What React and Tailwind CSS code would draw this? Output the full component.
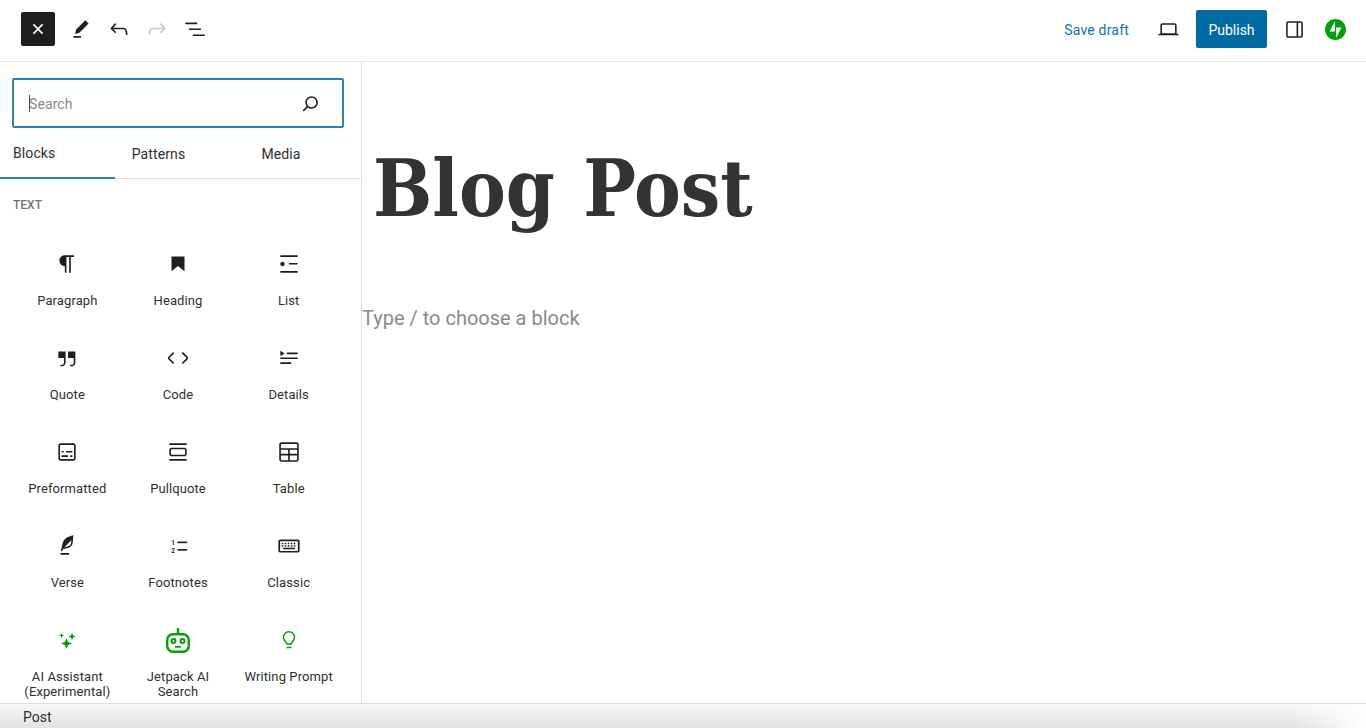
import React from "react";

const sans = "font-['Roboto','Liberation_Sans',sans-serif]";

function Icon({ d, size = 26, className = "", children }) {
  return (
    <svg width={size} height={size} viewBox="0 0 24 24" fill="currentColor" className={className}>
      {d && <path d={d} />}
      {children}
    </svg>
  );
}

const paths = {
  close: "M12 13.06l3.712 3.713 1.061-1.06L13.061 12l3.712-3.712-1.06-1.06L12 10.938 8.288 7.227l-1.061 1.06L10.939 12l-3.712 3.712 1.06 1.061L12 13.061z",
  pencil: "m19 7-3-3-8.5 8.5-1 4 4-1L19 7Zm-7 11.5H5V20h7v-1.5Z",
  undo: "M18.3 11.7c-.6-.6-1.4-.9-2.3-.9H6.7l2.9-3.3-1.1-1-4.5 5L8.5 16l1-1-2.7-2.7H16c.5 0 .9.2 1.3.5 1 1 1 3.4 1 4.5v.3h1.5v-.2c0-1.5 0-4.3-1.5-5.7z",
  redo: "M15.6 6.5l-1.1 1 2.9 3.3H8c-.9 0-1.7.3-2.3.9-1.4 1.5-1.4 4.2-1.4 5.6v.2h1.5v-.3c0-1.1 0-3.5 1-4.5.3-.3.7-.5 1.3-.5h9.2L14.5 15l1.1 1.1 4.6-4.6-4.6-5z",
  listView: "M3 6h11v1.5H3V6Zm3.5 5.5h11V13h-11v-1.5ZM21 17H10v1.5h11V17Z",
  search: "M13 5c-3.3 0-6 2.7-6 6 0 1.4.5 2.7 1.3 3.7l-3.8 3.8 1.1 1.1 3.8-3.8c1 .8 2.3 1.3 3.7 1.3 3.3 0 6-2.7 6-6S16.3 5 13 5zm0 10.5c-2.5 0-4.5-2-4.5-4.5s2-4.5 4.5-4.5 4.5 2 4.5 4.5-2 4.5-4.5 4.5z",
  laptop: "M20.5 16h-.7V8c0-1.1-.9-2-2-2H6.2c-1.1 0-2 .9-2 2v8h-.7c-.8 0-1.5.7-1.5 1.5h20c0-.8-.7-1.5-1.5-1.5zM5.7 8c0-.3.2-.5.5-.5h11.6c.3 0 .5.2.5.5v7.6H5.7V8z",
  sidebar: "M18 4H6c-1.1 0-2 .9-2 2v12c0 1.1.9 2 2 2h12c1.1 0 2-.9 2-2V6c0-1.1-.9-2-2-2zm-4 14.5H6c-.3 0-.5-.2-.5-.5V6c0-.3.2-.5.5-.5h8v13zm4.5-.5c0 .3-.2.5-.5.5h-2.5v-13H18c.3 0 .5.2.5.5v12z",
  paragraph: "m9.99609 14v-.2251l.00391.0001v6.225h1.5v-14.5h2.5v14.5h1.5v-14.5h3v-1.5h-8.50391c-2.76142 0-5 2.23858-5 5 0 2.7614 2.23858 5 5 5z",
  heading: "M6 5V18.5911L12 13.8473L18 18.5911V5H6Z",
  list: "M4 4v1.5h16V4H4zm8 8.5h8V11h-8v1.5zM4 20h16v-1.5H4V20zm4-8c0-1.1-.9-2-2-2s-2 .9-2 2 .9 2 2 2 2-.9 2-2z",
  quote: "M13 6v6h5.2v4c0 .8-.2 1.4-.5 1.7-.6.6-1.6.6-2.5.5h-.3v1.5h.5c1 0 2.3-.1 3.3-1 .6-.6 1-1.6 1-2.8V6H13zm-9 6h5.2v4c0 .8-.2 1.4-.5 1.7-.6.6-1.6.6-2.5.5h-.3v1.5h.5c1 0 2.3-.1 3.3-1 .6-.6 1-1.6 1-2.8V6H4v6z",
  code: "M20.8 10.7l-4.3-4.3-1.1 1.1 4.3 4.3c.1.1.1.3 0 .4l-4.3 4.3 1.1 1.1 4.3-4.3c.7-.8.7-1.9 0-2.6zM4.2 11.8l4.3-4.3-1-1-4.3 4.3c-.7.7-.7 1.8 0 2.5l4.3 4.3 1.1-1.1-4.3-4.3c-.2-.1-.2-.3-.1-.4z",
  details: "M4 16h10v1.5H4V16Zm0-4.5h16V13H4v-1.5ZM10 7h10v1.5H10V7ZM4 5.25l4 2.5-4 2.5v-5Z",
  preformatted: "M18 4H6c-1.1 0-2 .9-2 2v12c0 1.1.9 2 2 2h12c1.1 0 2-.9 2-2V6c0-1.1-.9-2-2-2zm.5 14c0 .3-.2.5-.5.5H6c-.3 0-.5-.2-.5-.5V6c0-.3.2-.5.5-.5h12c.3 0 .5.2.5.5v12zM7 16.5h6V15H7v1.5zm4-4h6V11h-6v1.5zM9 11H7v1.5h2V11zm6 5.5h2V15h-2v1.5z",
  pullquote: "M18 8H6c-1.1 0-2 .9-2 2v4c0 1.1.9 2 2 2h12c1.1 0 2-.9 2-2v-4c0-1.1-.9-2-2-2zm.5 6c0 .3-.2.5-.5.5H6c-.3 0-.5-.2-.5-.5v-4c0-.3.2-.5.5-.5h12c.3 0 .5.2.5.5v4zM4 4v1.5h16V4H4zm0 16h16v-1.5H4V20z",
  table: "M19 3H5c-1.1 0-2 .9-2 2v14c0 1.1.9 2 2 2h14c1.1 0 2-.9 2-2V5c0-1.1-.9-2-2-2ZM5 4.5h14c.3 0 .5.2.5.5v3.5h-15V5c0-.3.2-.5.5-.5Zm6.2 5.5v3.7H4.5V10h6.7Zm-6.7 9v-3.8h6.7v4.3H5c-.3 0-.5-.2-.5-.5Zm14.5.5h-6.3v-4.3h6.8V19c0 .3-.2.5-.5.5Zm.5-5.8h-6.8V10h6.8v3.7Z",
  verse: "M17.8 2l-.9.3c-.1 0-3.6 1-5.2 2.1C10 5.5 9.3 6.5 8.9 7.1c-.6.9-1.7 4.7-1.7 6.3l-.9 2.3c-.2.4 0 .8.4 1 .1 0 .2.1.3.1.3 0 .6-.2.7-.5l.6-1.5c.3 0 .7-.1 1.2-.2.7-.1 1.4-.3 2.2-.5.8-.2 1.6-.5 2.4-.8.7-.3 1.4-.7 1.9-1.2s.8-1.2 1-1.9c.2-.7.3-1.6.4-2.4.1-.8.1-1.7.2-2.5 0-.8.1-1.5.2-2.1V2zm-1.9 5.6c-.1.8-.2 1.5-.3 2.1-.2.6-.4 1-.6 1.3-.3.3-.8.6-1.4.9-.7.3-1.4.5-2.2.8-.6.2-1.3.3-1.8.4L15 7.5c.3-.3.6-.7 1-1.1 0 .4 0 .8-.1 1.2zM6 20h8v-1.5H6V20z",
};

const keyboardIcon = (
  <Icon>
    <path fillRule="evenodd" d="M3.8 6h16.400c.9 0 1.600.7 1.600 1.600v8.800c0 .9-.7 1.600-1.600 1.600H3.800c-.9 0-1.600-.7-1.600-1.600V7.600C2.200 6.700 2.900 6 3.800 6Zm0 1.500v9h16.400v-9H3.800Z" />
    <path d="M5.200 9h1.500v1.400H5.200zm2.800 0h1.500v1.400H8zm2.800 0h1.500v1.400h-1.500zm2.800 0h1.500v1.400h-1.500zm2.800 0h1.400v1.400h-1.400zM5.200 11.300h1.500v1.400H5.200zm2.800 0h1.500v1.400H8zm2.800 0h1.500v1.400h-1.500zm2.800 0h1.500v1.400h-1.500zm2.800 0h1.400v1.400h-1.400zM6.500 13.700h11V15h-11z" />
  </Icon>
);

const footnotesIcon = (
  <Icon>
    <rect x="11.500" y="7.900" width="9" height="1.500" />
    <rect x="11.500" y="14.800" width="9" height="1.500" />
    <text x="5.700" y="11" fontSize="6" fontWeight="700" fontFamily="Roboto, sans-serif">1</text>
    <text x="5.700" y="18" fontSize="6" fontWeight="700" fontFamily="Roboto, sans-serif">2</text>
  </Icon>
);

const sparklesIcon = (
  <Icon size={24}>
    <path d="M11.500 10l1.600 3.900 3.900 1.600-3.900 1.600-1.600 3.900-1.600-3.900-3.900-1.600 3.900-1.600zM17 4.800l1.100 2.600 2.600 1.100-2.600 1.100-1.100 2.600-1.100-2.600-2.600-1.100 2.600-1.100zM6.500 5l.8 1.700 1.700.8-1.700.8-.8 1.700-.8-1.700-1.700-.8 1.700-.8z" />
  </Icon>
);

const robotIcon = (
  <svg width="28" height="28" viewBox="0 0 28 28" fill="none" stroke="currentColor" strokeWidth="2.400">
    <path d="M14 2v6" />
    <rect x="3.200" y="8.200" width="21.600" height="17.600" rx="6" />
    <circle cx="9.500" cy="15" r="2" strokeWidth="2" />
    <circle cx="18.500" cy="15" r="2" strokeWidth="2" />
    <path d="M11 20.800h6" strokeWidth="1.800" />
  </svg>
);

const bulbIcon = (
  <svg width="24" height="24" viewBox="0 0 24 24" fill="none" stroke="currentColor" strokeWidth="1.500">
    <path d="M9.800 16c0-1.800-3.300-3.200-3.300-6.800a5.500 5.500 0 0 1 11 0c0 3.600-3.300 5-3.300 6.800z" />
    <path d="M9.500 19.500h5" />
  </svg>
);

const blocks = [
  { label: "Paragraph", icon: <Icon d={paths.paragraph} /> },
  { label: "Heading", icon: <Icon d={paths.heading} /> },
  { label: "List", icon: <Icon d={paths.list} /> },
  { label: "Quote", icon: <Icon d={paths.quote} /> },
  { label: "Code", icon: <Icon d={paths.code} /> },
  { label: "Details", icon: <Icon d={paths.details} /> },
  { label: "Preformatted", icon: <Icon d={paths.preformatted} /> },
  { label: "Pullquote", icon: <Icon d={paths.pullquote} /> },
  { label: "Table", icon: <Icon d={paths.table} /> },
  { label: "Verse", icon: <Icon d={paths.verse} /> },
  { label: "Footnotes", icon: footnotesIcon },
  { label: "Classic", icon: keyboardIcon },
  { label: "AI Assistant (Experimental)", icon: sparklesIcon, green: true },
  { label: "Jetpack AI Search", icon: robotIcon, green: true },
  { label: "Writing Prompt", icon: bulbIcon, green: true },
];

function BlockItem({ label, icon, green }) {
  return (
    <div className="flex flex-col items-center h-[94px] pt-[10px]">
      <div className={`h-[28px] flex items-center justify-center ${green ? "text-[#069e08]" : "text-[#1e1e1e]"}`}>
        {icon}
      </div>
      <div className="mt-[15px] w-[100px] text-center text-[13px] leading-[15px] tracking-[0.1px] text-[#2f2f2f]">{label}</div>
    </div>
  );
}

function TopBar() {
  return (
    <header className="h-[62px] shrink-0 flex items-center border-b border-[#e6e6e6] bg-white pl-[21px] pr-[20px] pb-[3px]">
      <button className="w-[34px] h-[34px] rounded-[2px] bg-[#1e1e1e] text-white flex items-center justify-center">
        <Icon d={paths.close} />
      </button>
      <div className="flex items-center gap-[12px] ml-[13px] text-[#1e1e1e]">
        <Icon d={paths.pencil} />
        <Icon d={paths.undo} />
        <Icon d={paths.redo} className="text-[#c8c8c8]" />
        <Icon d={paths.listView} />
      </div>
      <div className="ml-auto flex items-center">
        <span className="pt-[2px] text-[14px] tracking-[0.2px] text-[#0f73ad]">Save draft</span>
        <Icon d={paths.laptop} size={25} className="ml-[27px] text-[#1e1e1e]" />
        <button className="ml-[15px] w-[71px] h-[38px] pt-[2px] rounded-[2px] bg-[#006ba1] text-white text-[14px]">Publish</button>
        <Icon d={paths.sidebar} size={25} className="ml-[15px] text-[#1e1e1e]" />
        <svg width="21" height="21" viewBox="0 0 32 32" className="ml-[18px] text-[#069e08]" fill="currentColor">
          <path d="M16 0C7.200 0 0 7.200 0 16s7.200 16 16 16 16-7.200 16-16S24.800 0 16 0ZM15 19H7l8-16v16Zm2 10V13h8l-8 16Z" />
        </svg>
      </div>
    </header>
  );
}

function Sidebar() {
  return (
    <aside className="w-[362px] shrink-0 border-r border-[#e0e0e0] bg-white overflow-hidden">
      <div className="pt-[16px] pl-[12px] pr-[17px]">
        <div className="h-[50px] flex items-center justify-between border-2 border-[#2f82b8] rounded-[2px] pl-[15px] pr-[19px]">
          <div className="flex items-center text-[14px] tracking-[0.1px] text-[#8a8a8a]">
            <span className="w-px h-[17px] bg-[#444] mr-[-1px]" />
            <span className="pt-[2px]">Search</span>
          </div>
          <Icon d={paths.search} size={25} className="text-[#1e1e1e]" />
        </div>
      </div>
      <div className="h-[51px] flex border-b border-[#e0e0e0] text-[14px] tracking-[0.1px] text-[#2f2f2f]">
        <div className="w-[115px] pl-[13px] pt-[2px] flex items-center border-b-2 border-[#2f82b8] h-[51px]">Blocks</div>
        <div className="w-[87px] pt-[2px] flex items-center justify-center">Patterns</div>
        <div className="w-[158px] pt-[2px] flex items-center justify-center">Media</div>
      </div>
      <div className="pt-[19px] pl-[13px] text-[12px] leading-[14px] font-medium uppercase text-[#757575]">Text</div>
      <div className="mt-[28px] ml-[12px] w-[332px] grid grid-cols-3">
        {blocks.map((block) => (
          <BlockItem key={block.label} {...block} />
        ))}
      </div>
    </aside>
  );
}

function Canvas() {
  return (
    <main className="flex-1 bg-white overflow-hidden">
      <h1 className="mt-[72px] pl-[11px] font-['DejaVu_Serif_Condensed','DejaVu_Serif',serif] font-bold text-[78px] leading-[110px] [word-spacing:4px] text-[#333333] whitespace-nowrap">
        Blog Post
      </h1>
      <p className="mt-[59px] text-[20px] leading-[30px] text-[#8a8a8a]">Type / to choose a block</p>
    </main>
  );
}

export default function App() {
  return (
    <div className={`h-[728px] w-[1366px] flex flex-col overflow-hidden bg-white ${sans}`}>
      <TopBar />
      <div className="flex-1 flex min-h-0">
        <Sidebar />
        <Canvas />
      </div>
      <footer className="relative h-[25px] shrink-0 flex items-center border-t border-[#dedede] pl-[23px] pt-[2px] text-[14px] text-[#2f2f2f] bg-gradient-to-b from-[#f9f9f9] to-[#e2e2e2]">
        Post
        <div className="absolute right-0 top-0 bottom-0 w-[70px] bg-gradient-to-r from-transparent to-white" />
      </footer>
    </div>
  );
}
